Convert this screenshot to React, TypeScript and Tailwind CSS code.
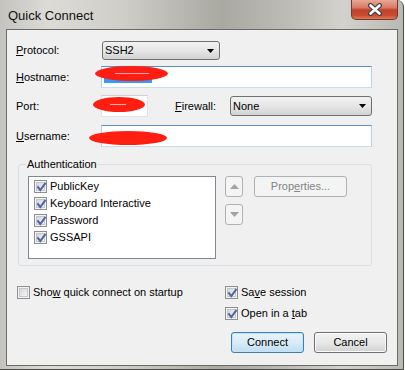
import React from "react";

const Check = ({ checked = true }: { checked?: boolean }) => (
  <div className="w-[13px] h-[13px] shrink-0 border border-[#8f8f8f] bg-[#f4f4f4] p-[1px]">
    <div className="w-full h-full border border-[#c3c6ca] bg-gradient-to-br from-[#d3d5d8] to-[#f7f7f7] relative">
      {checked && (
        <svg className="absolute left-[-2px] top-[-2px]" width="13" height="13" viewBox="0 0 13 13">
          <path d="M3 6.2 L5.3 9 L10 2.6" fill="none" stroke="#4c66a6" strokeWidth="2" strokeLinecap="square" />
        </svg>
      )}
    </div>
  </div>
);

const Combo = ({ w, h, text }: { w: string; h: string; text: string }) => (
  <div
    className={`${w} ${h} rounded-[3px] border border-[#707070] flex items-center justify-between pl-[2px] pr-[5px] bg-gradient-to-b from-[#f2f2f2] via-[#e6e6e6] to-[#d2d2d2]`}
  >
    <span>{text}</span>
    <svg width="7" height="4" viewBox="0 0 7 4">
      <path d="M0 0 H7 L3.5 4 Z" fill="#000" />
    </svg>
  </div>
);

export default function App() {
  return (
    <div
      className="w-[405px] h-[370px] bg-white relative overflow-hidden text-[11px] text-black leading-none"
      style={{ fontFamily: '"Liberation Sans", Arial, sans-serif' }}
    >
      <div className="w-[404px] h-[370px] flex flex-col rounded-tr-[7px] border-r border-b border-[#4a4a46] pl-[6px] pr-[5px] pb-[3px] bg-[linear-gradient(90deg,#c4c3bd_0%,#dcdbd6_12%,#cfcec8_30%,#a9a8a1_55%,#bdbcb6_72%,#d3d2cd_85%,#b9b8b2_100%)]">
        {/* Title bar */}
        <div className="h-[29px] flex items-start justify-between shrink-0">
          <div className="pl-[2px] pt-[9px] text-[13px] text-[#111]">Quick Connect</div>
          <div className="w-[47px] h-[20px] rounded-b-[5px] border border-t-0 border-[#6e3a31] bg-[linear-gradient(180deg,#e9a897_0%,#d87a66_40%,#c2432c_52%,#c84a30_80%,#e07a55_100%)] flex items-center justify-center">
            <svg width="16" height="13" viewBox="0 0 16 13">
              <path d="M3.5 2.5 L12.5 10.5 M12.5 2.5 L3.5 10.5" stroke="#3d3f4a" strokeWidth="5" strokeLinecap="round" />
              <path d="M3.5 2.5 L12.5 10.5 M12.5 2.5 L3.5 10.5" stroke="#ffffff" strokeWidth="2.6" strokeLinecap="round" />
            </svg>
          </div>
        </div>
        {/* Client */}
        <div className="flex-1 border border-[#6a6a66] bg-[#f0f0f0] pl-[9px] pr-[10px] pt-[11px] flex flex-col">
          {/* Protocol */}
          <div className="flex items-center h-[19px]">
            <div className="w-[86px]"><u>P</u>rotocol:</div>
            <Combo w="w-[118px]" h="h-[19px]" text="SSH2" />
          </div>
          {/* Hostname */}
          <div className="flex items-center h-[22px] mt-[6px]">
            <div className="w-[85px]"><u>H</u>ostname:</div>
            <div className="w-[271px] h-[22px] bg-white border border-[#b5cfe7] border-t-[#5a8fc3] border-b-[#c5def0] relative">
              <div className="absolute left-[2px] top-[2px] w-[48px] h-[14px] bg-[#3399ff]" />
            </div>
          </div>
          {/* Port / Firewall */}
          <div className="flex items-center h-[22px] mt-[7px]">
            <div className="w-[85px]">Port:</div>
            <div className="w-[47px] h-[22px] bg-white border border-[#e2e3ea] border-t-[#cfd1d6]" />
            <div className="ml-[27px] w-[55px]"><u>F</u>irewall:</div>
            <Combo w="w-[142px]" h="h-[20px]" text="None" />
          </div>
          {/* Username */}
          <div className="flex items-center h-[22px] mt-[8px]">
            <div className="w-[85px]"><u>U</u>sername:</div>
            <div className="w-[271px] h-[22px] bg-white border border-[#b5cfe7] border-t-[#5a8fc3] border-b-[#c5def0]" />
          </div>
          {/* Authentication group */}
          <div className="ml-[2px] mt-[17px] w-[354px] h-[102px] rounded-[3px] border border-[#d5dfe5] relative">
            <div className="absolute left-[7px] top-[-6px] px-[1px] bg-[#f0f0f0]">Authentication</div>
            <div className="flex pl-[9px] pt-[11px]">
              <div className="w-[188px] h-[83px] bg-white border border-[#828790] pl-[5px] pt-[3px] flex flex-col gap-[4px]">
                {["PublicKey", "Keyboard Interactive", "Password", "GSSAPI"].map((t) => (
                  <div key={t} className="flex items-center h-[13px] gap-[3px]">
                    <Check />
                    <span>{t}</span>
                  </div>
                ))}
              </div>
              <div className="ml-[9px] flex flex-col gap-[7px]">
                <div className="w-[18px] h-[21px] rounded-[3px] border border-[#adb2b5] bg-[#f4f4f4] flex items-center justify-center">
                  <svg width="9" height="5" viewBox="0 0 9 5"><path d="M0 5 H9 L4.5 0 Z" fill="#a3a3a3" /></svg>
                </div>
                <div className="w-[18px] h-[21px] rounded-[3px] border border-[#adb2b5] bg-[#f4f4f4] flex items-center justify-center">
                  <svg width="9" height="5" viewBox="0 0 9 5"><path d="M0 0 H9 L4.5 5 Z" fill="#a3a3a3" /></svg>
                </div>
              </div>
              <div className="ml-[11px] w-[93px] h-[21px] rounded-[3px] border border-[#adb2b5] bg-[#f4f4f4] flex items-center justify-center text-[#838383]">
                <span>Prop<u>e</u>rties...</span>
              </div>
            </div>
          </div>
          {/* Bottom options */}
          <div className="flex h-[13px] mt-[20px]">
            <div className="ml-[1px] w-[208px] flex items-center gap-[3px]">
              <Check checked={false} />
              <span>Sho<u>w</u> quick connect on startup</span>
            </div>
            <div className="flex items-center gap-[3px]">
              <Check />
              <span>Sa<u>v</u>e session</span>
            </div>
          </div>
          <div className="flex h-[13px] mt-[8px] pl-[209px] items-center gap-[3px]">
            <Check />
            <span>Open in a <u>t</u>ab</span>
          </div>
          <div className="flex justify-end gap-[10px] mt-[12px]">
            <div className="w-[73px] h-[21px] rounded-[3px] border border-[#3c7fb1] shadow-[inset_0_0_0_1px_#bfe4fb] bg-gradient-to-b from-[#e9f4fb] via-[#d9ebf7] to-[#c0ddef] flex items-center justify-center">
              Connect
            </div>
            <div className="w-[73px] h-[21px] rounded-[3px] border border-[#707070] shadow-[inset_0_0_0_1px_#fbfbfb] bg-gradient-to-b from-[#f2f2f2] via-[#e8e8e8] to-[#d3d3d3] flex items-center justify-center">
              Cancel
            </div>
          </div>
        </div>
      </div>

      {/* Red marker scribbles over redacted values */}
      <div className="absolute left-[95px] top-[66px] w-[73px] h-[15px] rounded-[50%] bg-[#ff1e10] blur-[0.5px]">
        <div className="absolute left-[20px] top-[7px] w-[34px] h-[1px] bg-[#f0a0c0]" />
      </div>
      <div className="absolute left-[93px] top-[97px] w-[52px] h-[15px] rounded-[50%] bg-[#ff1e10] blur-[0.5px]">
        <div className="absolute left-[17px] top-[7px] w-[16px] h-[1px] bg-[#f8b0b0]" />
      </div>
      <div className="absolute left-[89px] top-[131px] w-[78px] h-[14px] rounded-[50%] bg-[#ff1e10] blur-[0.5px]" />
    </div>
  );
}
